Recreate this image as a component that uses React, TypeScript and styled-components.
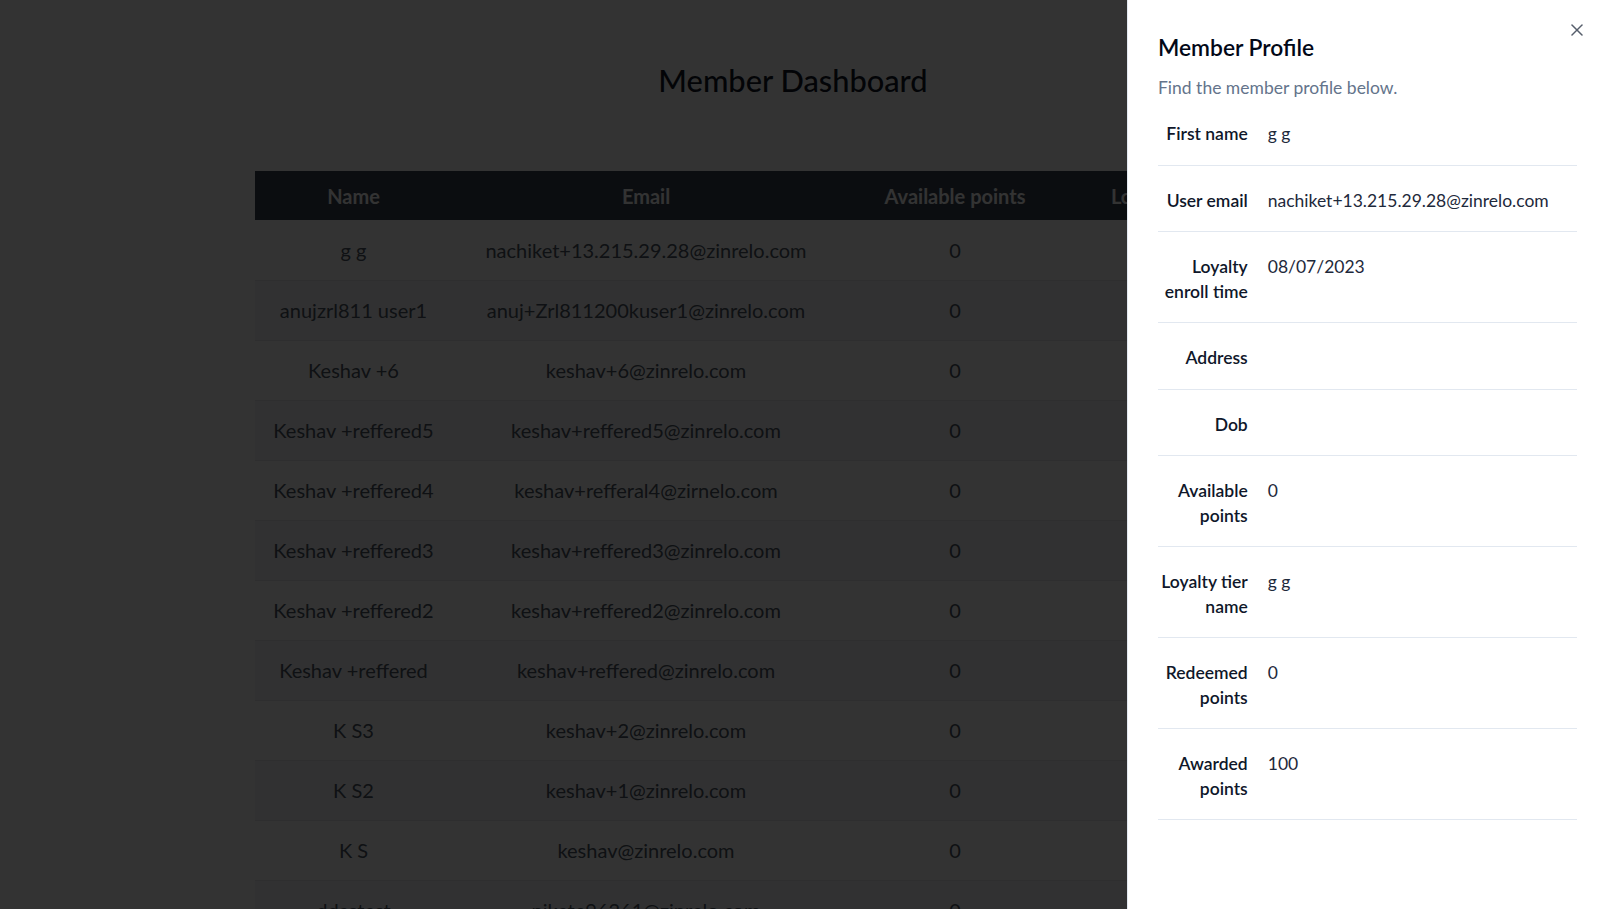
import React from "react";
import styled, { createGlobalStyle } from "styled-components";
import { X } from "lucide-react";

const GlobalStyle = createGlobalStyle`
  html, body { margin: 0; padding: 0; background: #ffffff; overflow: hidden; }
  body { font-family: Lato, "Liberation Sans", sans-serif; }
  * { box-sizing: border-box; }
`;

const Page = styled.main`
  width: calc(100% - 17px);
  height: 909px;
  overflow: hidden;
  padding-top: 58px;
`;

const Title = styled.h1`
  margin: 0;
  text-align: center;
  font-size: 30.8px;
  line-height: 45px;
  font-weight: 500;
  color: #111827;
`;

const Table = styled.table`
  margin: 68px auto 0;
  width: 1076px;
  table-layout: fixed;
  border-collapse: collapse;
  font-size: 20px;
`;

const HeadCell = styled.th<{ $padRight?: number }>`
  height: 49px;
  padding: 0 ${(p) => p.$padRight ?? 0}px 0 0;
  background: #374151;
  color: #ffffff;
  font-weight: 700;
  text-align: center;
  white-space: nowrap;
  overflow: hidden;
`;

const BodyRow = styled.tr<{ $striped: boolean }>`
  height: 60px;
  background: ${(p) => (p.$striped ? "#f5f6f8" : "#ffffff")};
  border-bottom: 1px solid #e5e7eb;
`;

const Cell = styled.td`
  text-align: center;
  color: #4b5563;
  white-space: nowrap;
  overflow: hidden;
`;

const Overlay = styled.div`
  position: fixed;
  inset: 0;
  background: rgba(0, 0, 0, 0.8);
`;

const Sheet = styled.aside`
  position: fixed;
  top: 0;
  bottom: 0;
  right: -4px;
  width: 480px;
  background: #ffffff;
  border-left: 1px solid #e2e8f0;
  padding: 30px 30px 0 30px;
`;

const CloseButton = styled.button`
  position: absolute;
  top: 20px;
  right: 20px;
  width: 20px;
  height: 20px;
  padding: 0;
  border: none;
  background: transparent;
  color: #1e293b;
  opacity: 0.75;
  display: flex;
  align-items: center;
  justify-content: center;
`;

const SheetTitle = styled.h2`
  margin: 0;
  font-size: 22.8px;
  line-height: 35px;
  font-weight: 600;
  color: #020817;
`;

const SheetDescription = styled.p`
  margin: 10px 0 0;
  font-size: 17.5px;
  line-height: 25px;
  color: #64748b;
`;

const List = styled.div`
  margin-top: -1px;
  display: flex;
  flex-direction: column;
`;

const Row = styled.div`
  display: grid;
  grid-template-columns: repeat(4, 1fr);
  column-gap: 20px;
  padding: 23px 0 18px;
  border-bottom: 1px solid #e2e8f0;
  font-size: 17.5px;
  line-height: 24.5px;
`;

const Label = styled.div`
  text-align: right;
  font-weight: 600;
  color: #0f172a;
`;

const Value = styled.div`
  grid-column: span 3;
  color: #1e293b;
`;

const members = [
  ["g g", "nachiket+13.215.29.28@zinrelo.com", "0"],
  ["anujzrl811 user1", "anuj+Zrl811200kuser1@zinrelo.com", "0"],
  ["Keshav +6", "keshav+6@zinrelo.com", "0"],
  ["Keshav +reffered5", "keshav+reffered5@zinrelo.com", "0"],
  ["Keshav +reffered4", "keshav+refferal4@zirnelo.com", "0"],
  ["Keshav +reffered3", "keshav+reffered3@zinrelo.com", "0"],
  ["Keshav +reffered2", "keshav+reffered2@zinrelo.com", "0"],
  ["Keshav +reffered", "keshav+reffered@zinrelo.com", "0"],
  ["K S3", "keshav+2@zinrelo.com", "0"],
  ["K S2", "keshav+1@zinrelo.com", "0"],
  ["K S", "keshav@zinrelo.com", "0"],
  ["ddastest", "nikete96261@zinrelo.com", "0"],
];

const profile: [string, string][] = [
  ["First name", "g g"],
  ["User email", "nachiket+13.215.29.28@zinrelo.com"],
  ["Loyalty enroll time", "08/07/2023"],
  ["Address", ""],
  ["Dob", ""],
  ["Available points", "0"],
  ["Loyalty tier name", "g g"],
  ["Redeemed points", "0"],
  ["Awarded points", "100"],
];

export default function App() {
  return (
    <>
      <GlobalStyle />
      <Page>
        <Title>Member Dashboard</Title>
        <Table>
          <colgroup>
            <col style={{ width: 197 }} />
            <col style={{ width: 388 }} />
            <col style={{ width: 230 }} />
            <col style={{ width: 261 }} />
          </colgroup>
          <thead>
            <tr>
              <HeadCell>Name</HeadCell>
              <HeadCell>Email</HeadCell>
              <HeadCell>Available points</HeadCell>
              <HeadCell $padRight={26}>Loyalty tier name</HeadCell>
            </tr>
          </thead>
          <tbody>
            {members.map((m, i) => (
              <BodyRow key={i} $striped={i % 2 === 1}>
                {m.map((c, j) => (
                  <Cell key={j}>{c}</Cell>
                ))}
                <Cell />
              </BodyRow>
            ))}
          </tbody>
        </Table>
      </Page>
      <Overlay />
      <Sheet>
        <CloseButton aria-label="Close">
          <X size={20} strokeWidth={1.8} />
        </CloseButton>
        <SheetTitle>Member Profile</SheetTitle>
        <SheetDescription>Find the member profile below.</SheetDescription>
        <List>
          {profile.map(([label, value]) => (
            <Row key={label}>
              <Label>{label}</Label>
              <Value>{value}</Value>
            </Row>
          ))}
        </List>
      </Sheet>
    </>
  );
}
